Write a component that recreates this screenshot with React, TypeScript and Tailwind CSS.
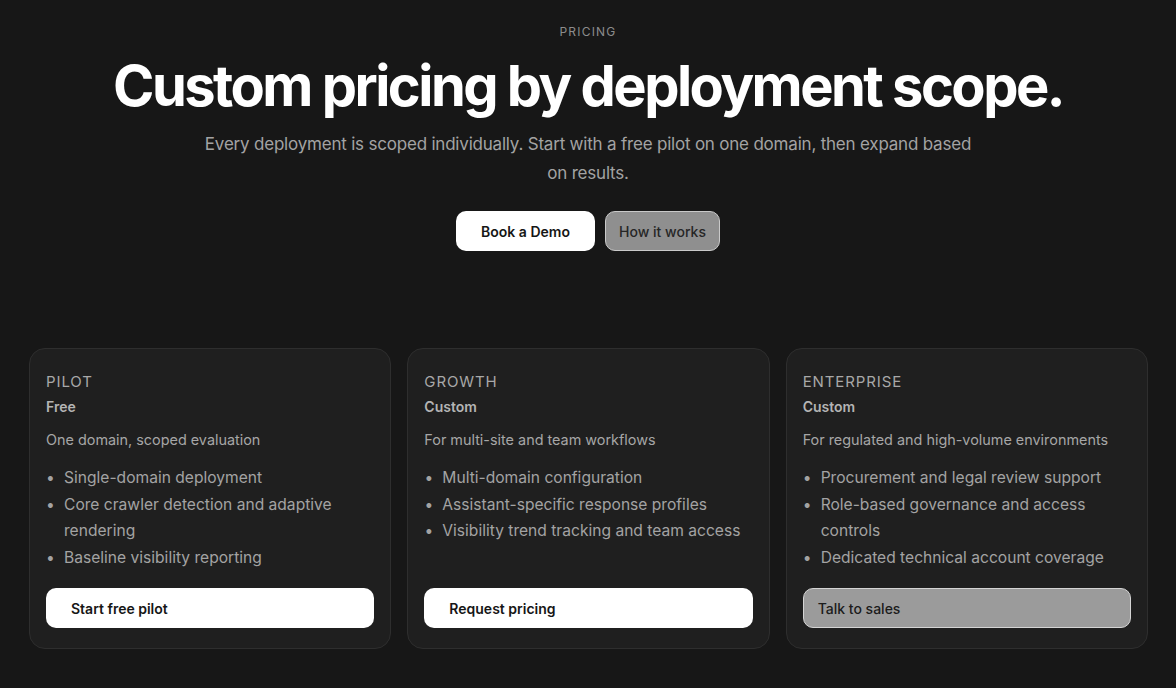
import React from "react";

type Plan = {
  name: string;
  price: string;
  blurb: string;
  items: string[];
  cta: string;
  ghost?: boolean;
};

const plans: Plan[] = [
  {
    name: "Pilot",
    price: "Free",
    blurb: "One domain, scoped evaluation",
    items: [
      "Single-domain deployment",
      "Core crawler detection and adaptive rendering",
      "Baseline visibility reporting",
    ],
    cta: "Start free pilot",
  },
  {
    name: "Growth",
    price: "Custom",
    blurb: "For multi-site and team workflows",
    items: [
      "Multi-domain configuration",
      "Assistant-specific response profiles",
      "Visibility trend tracking and team access",
    ],
    cta: "Request pricing",
  },
  {
    name: "Enterprise",
    price: "Custom",
    blurb: "For regulated and high-volume environments",
    items: [
      "Procurement and legal review support",
      "Role-based governance and access controls",
      "Dedicated technical account coverage",
    ],
    cta: "Talk to sales",
    ghost: true,
  },
];

const PlanCard = ({ plan }: { plan: Plan }) => (
  <div className="flex flex-col rounded-2xl border border-[#2e2e2e] bg-[#1f1f1f] px-4 pt-[23px] pb-5">
    <div className="text-[15px] uppercase tracking-[0.06em] text-[#a8a8a8] leading-5">
      {plan.name}
    </div>
    <div className="mt-[5px] text-[14px] font-semibold text-[#b4b4b4] leading-5">
      {plan.price}
    </div>
    <p className="mt-[13px] text-[14.4px] text-[#a6a6a6] leading-5">{plan.blurb}</p>
    <ul className="mt-[15px] flex flex-col pl-0">
      {plan.items.map((item) => (
        <li key={item} className="flex gap-[9px] text-[15.6px] leading-[26.5px] text-[#a3a3a3]">
          <span className="w-[9px] shrink-0 text-center">•</span>
          <span>{item}</span>
        </li>
      ))}
    </ul>
    <div className="mt-auto pt-[17px]">
      {plan.ghost ? (
        <button className="h-10 w-full rounded-[10px] border border-[#d4d4d4] bg-[#9b9b9b] px-[14px] text-left text-[14px] font-medium text-[#1c1c1c]">
          {plan.cta}
        </button>
      ) : (
        <button className="h-10 w-full rounded-[10px] bg-white px-[25px] text-left text-[14px] font-semibold text-[#161616]">
          {plan.cta}
        </button>
      )}
    </div>
  </div>
);

export default function App() {
  return (
    <div
      className="min-h-[688px] w-full bg-[#171717] text-white"
      style={{ fontFamily: "Inter, 'Liberation Sans', sans-serif" }}
    >
      <section className="flex flex-col items-center pt-[24px] text-center">
        <div className="text-[12px] uppercase tracking-[0.1em] text-[#8c8c8c] leading-4">
          Pricing
        </div>
        <h1 className="mt-[16px] text-[56px] font-bold leading-[60px] tracking-[-0.045em] text-white">
          Custom pricing by deployment scope.
        </h1>
        <p className="mt-[14px] max-w-[776px] text-[17px] leading-[29px] tracking-[-0.012em] text-[#a3a3a3]">
          Every deployment is scoped individually. Start with a free pilot on one domain, then expand based on results.
        </p>
        <div className="mt-[23px] flex gap-[10px]">
          <button className="h-10 w-[139px] rounded-[10px] bg-white text-[14px] font-semibold text-[#161616]">
            Book a Demo
          </button>
          <button className="h-10 w-[115px] rounded-[10px] border border-[#c9c9c9] bg-[#8f8f8f] text-[14px] font-medium text-[#262626]">
            How it works
          </button>
        </div>
      </section>
      <section className="mt-[97px] grid grid-cols-3 gap-4 pl-[29px] pr-[28px] pb-10">
        {plans.map((p) => (
          <PlanCard key={p.name} plan={p} />
        ))}
      </section>
    </div>
  );
}
